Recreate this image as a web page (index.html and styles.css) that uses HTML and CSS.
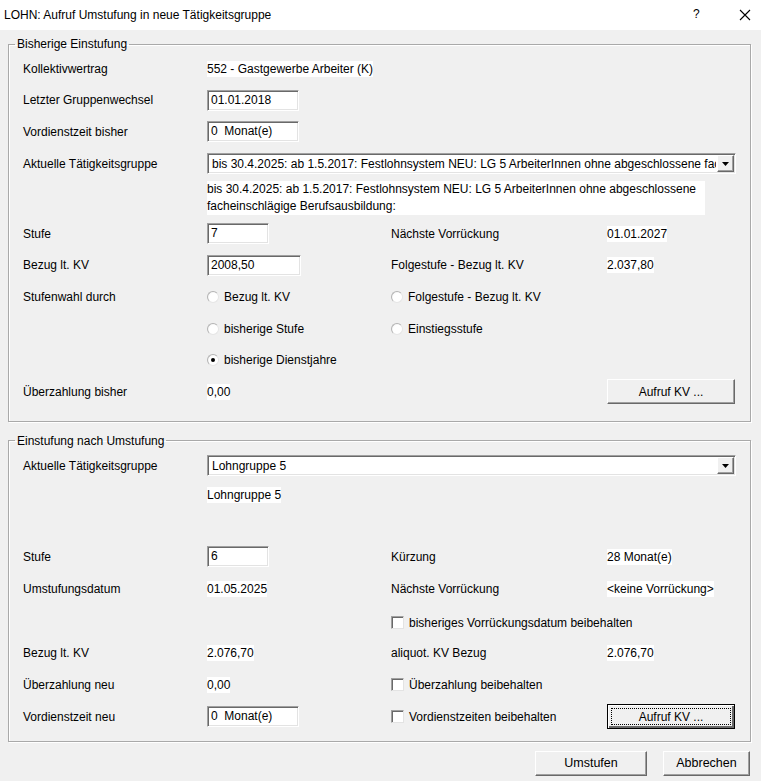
FILE: index.html
```html
<!DOCTYPE html>
<html lang="de">
<head>
    <meta charset="UTF-8">
    <title>LOHN: Aufruf Umstufung in neue Tätigkeitsgruppe</title>
    <link rel="stylesheet" href="styles.css">
</head>
<body>
    <div class="titlebar">
        <span class="title">LOHN: Aufruf Umstufung in neue Tätigkeitsgruppe</span>
        <span class="help">?</span>
        <span class="close">
            <svg width="12" height="12" viewBox="0 0 12 12"><path d="M1 1L11 11M11 1L1 11" stroke="#000" stroke-width="1.1" fill="none"/></svg>
        </span>
    </div>

    <div class="dialog">
        <fieldset class="group group-old">
            <legend>Bisherige Einstufung</legend>

            <div class="row">
                <span class="label">Kollektivwertrag</span>
                <span class="cell wide"><span class="value">552 - Gastgewerbe Arbeiter (K)</span></span>
            </div>
            <div class="row">
                <span class="label">Letzter Gruppenwechsel</span>
                <span class="cell"><span class="edit w92">01.01.2018</span></span>
            </div>
            <div class="row">
                <span class="label">Vordienstzeit bisher</span>
                <span class="cell"><span class="edit w92">0&nbsp; Monat(e)</span></span>
            </div>
            <div class="row">
                <span class="label">Aktuelle Tätigkeitsgruppe</span>
                <span class="cell wide">
                    <span class="combo">
                        <span class="combo-text">bis 30.4.2025: ab 1.5.2017: Festlohnsystem NEU: LG 5 ArbeiterInnen ohne abgeschlossene facheinschlägige Berufsausbildung:</span>
                        <span class="combo-btn"><svg width="7" height="4" viewBox="0 0 7 4"><path d="M0 0H7L3.5 4Z" fill="#000"/></svg></span>
                    </span>
                </span>
            </div>
            <div class="row desc-row">
                <span class="cell wide">
                    <span class="desc">bis 30.4.2025: ab 1.5.2017: Festlohnsystem NEU: LG 5 ArbeiterInnen ohne abgeschlossene<br>facheinschlägige Berufsausbildung:</span>
                </span>
            </div>
            <div class="row">
                <span class="label">Stufe</span>
                <span class="cell"><span class="edit w62">7</span></span>
                <span class="label">Nächste Vorrückung</span>
                <span class="cell"><span class="value">01.01.2027</span></span>
            </div>
            <div class="row">
                <span class="label">Bezug lt. KV</span>
                <span class="cell"><span class="edit w94">2008,50</span></span>
                <span class="label">Folgestufe - Bezug lt. KV</span>
                <span class="cell"><span class="value">2.037,80</span></span>
            </div>
            <div class="row">
                <span class="label">Stufenwahl durch</span>
                <span class="cell"><span class="radio"></span>Bezug lt. KV</span>
                <span class="cell"><span class="radio"></span>Folgestufe - Bezug lt. KV</span>
            </div>
            <div class="row">
                <span class="cell col2"><span class="radio"></span>bisherige Stufe</span>
                <span class="cell"><span class="radio"></span>Einstiegsstufe</span>
            </div>
            <div class="row">
                <span class="cell col2"><span class="radio checked"></span>bisherige Dienstjahre</span>
            </div>
            <div class="row">
                <span class="label">Überzahlung bisher</span>
                <span class="cell"><span class="value">0,00</span></span>
                <span class="cell col4"><button class="btn btn-kv">Aufruf KV ...</button></span>
            </div>
        </fieldset>

        <fieldset class="group group-new">
            <legend>Einstufung nach Umstufung</legend>

            <div class="row">
                <span class="label">Aktuelle Tätigkeitsgruppe</span>
                <span class="cell wide">
                    <span class="combo">
                        <span class="combo-text">Lohngruppe 5</span>
                        <span class="combo-btn"><svg width="7" height="4" viewBox="0 0 7 4"><path d="M0 0H7L3.5 4Z" fill="#000"/></svg></span>
                    </span>
                </span>
            </div>
            <div class="row short-row">
                <span class="cell col2"><span class="value">Lohngruppe 5</span></span>
            </div>
            <div class="row">
                <span class="label">Stufe</span>
                <span class="cell"><span class="edit w62">6</span></span>
                <span class="label">Kürzung</span>
                <span class="cell"><span class="value">28 Monat(e)</span></span>
            </div>
            <div class="row">
                <span class="label">Umstufungsdatum</span>
                <span class="cell"><span class="value">01.05.2025</span></span>
                <span class="label">Nächste Vorrückung</span>
                <span class="cell"><span class="value">&lt;keine Vorrückung&gt;</span></span>
            </div>
            <div class="row check-row">
                <span class="cell col3-4"><span class="check"></span>bisheriges Vorrückungsdatum beibehalten</span>
            </div>
            <div class="row">
                <span class="label">Bezug lt. KV</span>
                <span class="cell"><span class="value">2.076,70</span></span>
                <span class="label">aliquot. KV Bezug</span>
                <span class="cell"><span class="value">2.076,70</span></span>
            </div>
            <div class="row">
                <span class="label">Überzahlung neu</span>
                <span class="cell"><span class="value">0,00</span></span>
                <span class="cell col3-4"><span class="check"></span>Überzahlung beibehalten</span>
            </div>
            <div class="row">
                <span class="label">Vordienstzeit neu</span>
                <span class="cell"><span class="edit w92">0&nbsp; Monat(e)</span></span>
                <span class="cell"><span class="check"></span>Vordienstzeiten beibehalten</span>
                <span class="cell"><button class="btn btn-kv focused"><span class="focus-ring">Aufruf KV ...</span></button></span>
            </div>
        </fieldset>

        <div class="footer">
            <button class="btn btn-ok">Umstufen</button>
            <button class="btn btn-cancel">Abbrechen</button>
        </div>
    </div>
</body>
</html>
```

FILE: styles.css
```css
body {
    margin: 0;
    background: #f0f0f0;
    font-family: 'Liberation Sans', Arial, sans-serif;
    font-size: 12px;
    color: #000;
}

.titlebar {
    height: 30px;
    background: #fff;
    display: flex;
    align-items: center;
    font-size: 12px;
}

.title {
    flex: 1;
    padding-left: 4px;
    padding-bottom: 1px;
}

.help {
    width: 14px;
    margin-right: 32px;
    font-size: 12px;
    padding-bottom: 2px;
}

.close {
    width: 12px;
    margin-right: 10px;
    display: flex;
}

.dialog {
    padding: 7px 10px 0 8px;
}

.group {
    margin: 0;
    border: 1px solid #a9a9a9;
    box-shadow: inset 1px 1px 0 #fff, 1px 1px 0 #fff;
    padding: 2px 14px 13px 14px;
}

.group-new {
    margin-top: 12px;
    padding-bottom: 8px;
}

legend {
    padding: 0 2px;
    margin-left: -8px;
    line-height: 14px;
}

.row {
    display: grid;
    grid-template-columns: 184px 184px 216px 1fr;
    align-items: center;
    height: 31.6px;
}

.group-new .row {
    height: 32px;
}

.group-new .short-row {
    height: 26px;
    margin-bottom: 33px;
}

.group-new .check-row {
    padding-top: 4px;
    height: 28px;
}

.desc-row {
    height: 38.6px;
    align-items: start;
}

.cell {
    display: flex;
    align-items: center;
}

.wide { grid-column: 2 / 5; }
.col2 { grid-column: 2; }
.col3-4 { grid-column: 3 / 5; }
.col4 { grid-column: 4; }

.value {
    background: #fff;
    line-height: 16px;
}

.desc {
    margin-top: 2px;
    background: #fff;
    line-height: 17px;
    width: 498px;
}

.edit {
    box-sizing: border-box;
    height: 21px;
    background: #fff;
    border: 1px solid;
    border-color: #a0a0a0 #fff #fff #a0a0a0;
    box-shadow: inset 1px 1px 0 #696969, inset -1px -1px 0 #e3e3e3;
    padding: 2px 0 0 3px;
    white-space: nowrap;
}

.w92 { width: 92px; }
.w62 { width: 62px; }
.w94 { width: 94px; }

.combo {
    box-sizing: border-box;
    width: 100%;
    height: 21px;
    background: #fff;
    border: 1px solid;
    border-color: #a0a0a0 #fff #fff #a0a0a0;
    box-shadow: inset 1px 1px 0 #696969, inset -1px -1px 0 #e3e3e3;
    display: flex;
    align-items: center;
    padding: 0 1px 0 4px;
}

.combo-text {
    flex: 1;
    white-space: nowrap;
    overflow: hidden;
}

.combo-btn {
    box-sizing: border-box;
    width: 17px;
    height: 17px;
    margin-left: 1px;
    background: #f0f0f0;
    border: 1px solid;
    border-color: #fff #696969 #696969 #fff;
    box-shadow: inset -1px -1px 0 #a0a0a0;
    display: flex;
    align-items: center;
    justify-content: center;
}

.radio {
    box-sizing: border-box;
    width: 12px;
    height: 12px;
    border-radius: 50%;
    margin: 0 5px 0 0;
    background: radial-gradient(circle at 60% 60%, #fff 55%, #e8e8e8);
    border: 1px solid #b4b4b4;
    border-right-color: #e6e6e6;
    border-bottom-color: #e6e6e6;
    position: relative;
}

.radio.checked::after {
    content: '';
    position: absolute;
    left: 3px;
    top: 3px;
    width: 4px;
    height: 4px;
    border-radius: 50%;
    background: #000;
}

.check {
    box-sizing: border-box;
    width: 13px;
    height: 13px;
    background: #fff;
    border: 1px solid #a0a0a0;
    border-right-color: #e3e3e3;
    border-bottom-color: #e3e3e3;
    box-shadow: inset 1px 1px 0 #696969;
    margin-right: 5px;
}

.btn {
    font-family: inherit;
    font-size: 12px;
    color: #000;
    background: #f0f0f0;
    border: 1px solid;
    border-color: #fff #696969 #696969 #fff;
    box-shadow: inset -1px -1px 0 #a0a0a0;
    height: 25px;
    padding: 0;
    cursor: pointer;
}

.btn-kv {
    width: 128px;
}

.btn.focused {
    border: 1px solid #000;
    box-shadow: inset 1px 1px 0 #fff, inset -2px -2px 0 #696969, inset -1px -1px 0 #a0a0a0;
    padding: 3px;
}

.focus-ring {
    display: flex;
    align-items: center;
    justify-content: center;
    height: 100%;
    border: 1px dotted #000;
    box-sizing: border-box;
}

.footer {
    display: flex;
    justify-content: flex-end;
    gap: 16px;
    margin-top: 9px;
    padding-right: 1px;
}

.btn-ok {
    width: 112px;
    font-size: 12.5px;
}

.btn-cancel {
    width: 87px;
    font-size: 12.5px;
}
```
